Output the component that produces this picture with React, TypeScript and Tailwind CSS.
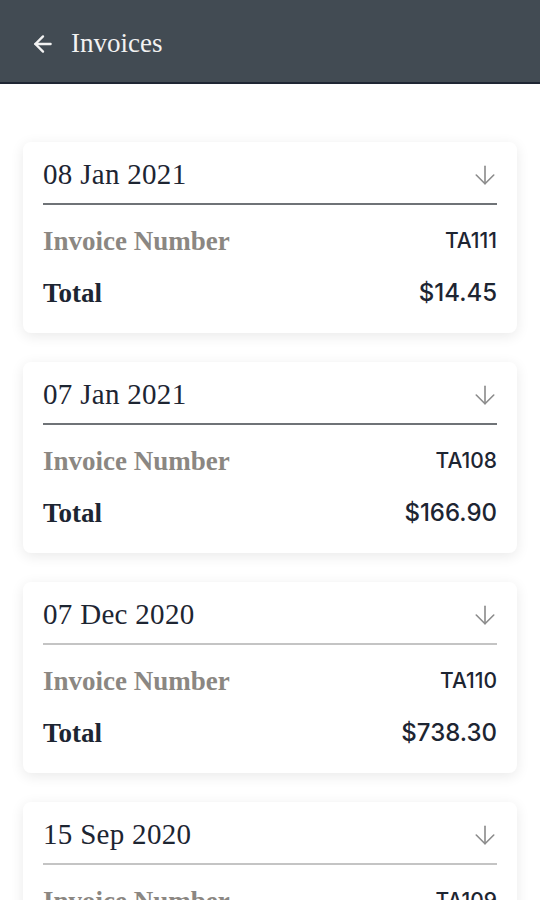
import { ArrowDown, ArrowLeft } from 'lucide-react';

const invoices = [
    { date: '08 Jan 2021', number: 'TA111', total: '$14.45', rule: 'bg-[#6f7377]' },
    { date: '07 Jan 2021', number: 'TA108', total: '$166.90', rule: 'bg-[#6f7377]' },
    { date: '07 Dec 2020', number: 'TA110', total: '$738.30', rule: 'bg-[#c4c4c4]' },
    { date: '15 Sep 2020', number: 'TA109', total: '$52.00', rule: 'bg-[#c4c4c4]' },
];

const serif = "font-['Liberation_Serif',serif]";
const sans = "font-['Inter','Open_Sans',sans-serif]";

function InvoiceCard({ date, number, total, rule }: (typeof invoices)[number]) {
    return (
        <div className="rounded-lg bg-white px-5 pt-[14px] pb-[22px] shadow-[0_3px_14px_rgba(0,0,0,0.09)]">
            <div className="flex h-[44px] items-center justify-between pb-[6px]">
                <span className={`${serif} text-[29px] tracking-[0.3px] text-[#1d2532]`}>{date}</span>
                <ArrowDown className="-mr-[3px] h-[30px] w-[30px] text-[#8c8c8c]" strokeWidth={1.3} />
            </div>
            <div className={`mt-[3px] h-[2px] ${rule}`} />
            <div className="pt-[18px]">
                <div className="flex h-[36px] items-center justify-between">
                    <span className={`${serif} text-[27px] font-bold text-[#8b8782]`}>Invoice Number</span>
                    <span className={`${sans} text-[21px] font-medium text-[#1d2532]`}>{number}</span>
                </div>
                <div className="mt-4 flex h-[36px] items-center justify-between">
                    <span className={`${serif} text-[27px] font-bold text-[#1d2532]`}>Total</span>
                    <span className={`${sans} text-[24px] font-medium text-[#1d2532]`}>{total}</span>
                </div>
            </div>
        </div>
    );
}

export default function App() {
    return (
        <div className="h-[900px] overflow-hidden bg-white">
            <header className="flex h-[84px] items-center gap-[15px] border-b-2 border-[#1f2633] bg-[#424b53] pt-[5px] pl-[30px] text-[#f2f2f2]">
                <ArrowLeft className="h-[26px] w-[26px]" strokeWidth={2.2} />
                <h1 className={`${serif} text-[27px]`}>Invoices</h1>
            </header>
            <main className="flex flex-col gap-[29px] px-[23px] pt-[58px]">
                {invoices.map((inv) => (
                    <InvoiceCard key={inv.number} {...inv} />
                ))}
            </main>
        </div>
    );
}
